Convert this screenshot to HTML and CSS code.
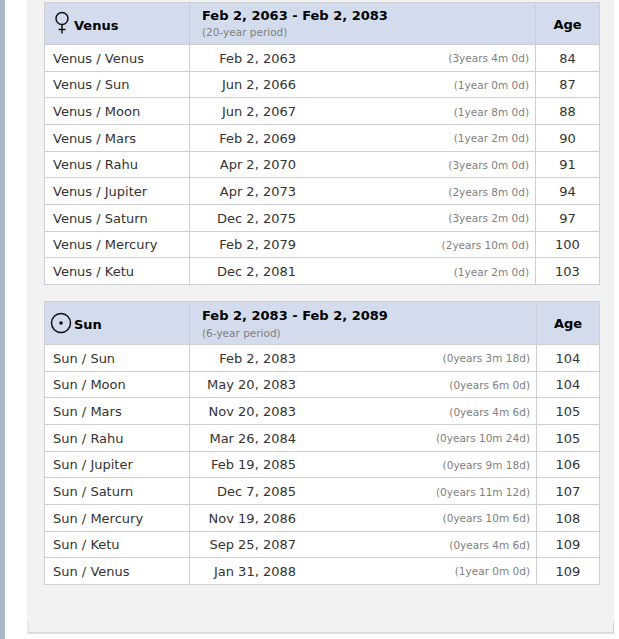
FILE: index.html
```html
<!DOCTYPE html>
<html lang="en">
<head>
<meta charset="utf-8">
<title>Dasha periods</title>
<link rel="stylesheet" href="styles.css">
</head>
<body>
<div class="page">
  <div class="rail"></div>
  <main class="panel">
    <div class="tables">
    <table class="dasha first">
      <thead>
        <tr>
          <th class="planet"><span class="planet-in"><svg class="ico-venus" viewBox="0 0 16 24" width="16" height="24"><circle cx="8" cy="7.5" r="6" fill="none" stroke="#111" stroke-width="1.5"/><path d="M8 13.5v9M4.5 18.5h7" fill="none" stroke="#111" stroke-width="1.5"/></svg>Venus</span></th>
          <th class="range">Feb 2, 2063 - Feb 2, 2083<small>(20-year period)</small></th>
          <th class="age">Age</th>
        </tr>
      </thead>
      <tbody>
        <tr><td class="name">Venus / Venus</td><td class="mid"><div class="mid-in"><span class="date">Feb 2, 2063</span><span class="dur">(3years 4m 0d)</span></div></td><td class="age">84</td></tr>
        <tr><td class="name">Venus / Sun</td><td class="mid"><div class="mid-in"><span class="date">Jun 2, 2066</span><span class="dur">(1year 0m 0d)</span></div></td><td class="age">87</td></tr>
        <tr><td class="name">Venus / Moon</td><td class="mid"><div class="mid-in"><span class="date">Jun 2, 2067</span><span class="dur">(1year 8m 0d)</span></div></td><td class="age">88</td></tr>
        <tr><td class="name">Venus / Mars</td><td class="mid"><div class="mid-in"><span class="date">Feb 2, 2069</span><span class="dur">(1year 2m 0d)</span></div></td><td class="age">90</td></tr>
        <tr><td class="name">Venus / Rahu</td><td class="mid"><div class="mid-in"><span class="date">Apr 2, 2070</span><span class="dur">(3years 0m 0d)</span></div></td><td class="age">91</td></tr>
        <tr><td class="name">Venus / Jupiter</td><td class="mid"><div class="mid-in"><span class="date">Apr 2, 2073</span><span class="dur">(2years 8m 0d)</span></div></td><td class="age">94</td></tr>
        <tr><td class="name">Venus / Saturn</td><td class="mid"><div class="mid-in"><span class="date">Dec 2, 2075</span><span class="dur">(3years 2m 0d)</span></div></td><td class="age">97</td></tr>
        <tr><td class="name">Venus / Mercury</td><td class="mid"><div class="mid-in"><span class="date">Feb 2, 2079</span><span class="dur">(2years 10m 0d)</span></div></td><td class="age">100</td></tr>
        <tr><td class="name">Venus / Ketu</td><td class="mid"><div class="mid-in"><span class="date">Dec 2, 2081</span><span class="dur">(1year 2m 0d)</span></div></td><td class="age">103</td></tr>
      </tbody>
    </table>
    <table class="dasha second">
      <thead>
        <tr>
          <th class="planet"><span class="planet-in"><svg class="ico-sun" viewBox="0 0 22 22" width="22" height="22"><circle cx="11" cy="11" r="9.5" fill="none" stroke="#111" stroke-width="1.5"/><circle cx="11" cy="11" r="1.8" fill="#111"/></svg>Sun</span></th>
          <th class="range">Feb 2, 2083 - Feb 2, 2089<small>(6-year period)</small></th>
          <th class="age">Age</th>
        </tr>
      </thead>
      <tbody>
        <tr><td class="name">Sun / Sun</td><td class="mid"><div class="mid-in"><span class="date">Feb 2, 2083</span><span class="dur">(0years 3m 18d)</span></div></td><td class="age">104</td></tr>
        <tr><td class="name">Sun / Moon</td><td class="mid"><div class="mid-in"><span class="date">May 20, 2083</span><span class="dur">(0years 6m 0d)</span></div></td><td class="age">104</td></tr>
        <tr><td class="name">Sun / Mars</td><td class="mid"><div class="mid-in"><span class="date">Nov 20, 2083</span><span class="dur">(0years 4m 6d)</span></div></td><td class="age">105</td></tr>
        <tr><td class="name">Sun / Rahu</td><td class="mid"><div class="mid-in"><span class="date">Mar 26, 2084</span><span class="dur">(0years 10m 24d)</span></div></td><td class="age">105</td></tr>
        <tr><td class="name">Sun / Jupiter</td><td class="mid"><div class="mid-in"><span class="date">Feb 19, 2085</span><span class="dur">(0years 9m 18d)</span></div></td><td class="age">106</td></tr>
        <tr><td class="name">Sun / Saturn</td><td class="mid"><div class="mid-in"><span class="date">Dec 7, 2085</span><span class="dur">(0years 11m 12d)</span></div></td><td class="age">107</td></tr>
        <tr><td class="name">Sun / Mercury</td><td class="mid"><div class="mid-in"><span class="date">Nov 19, 2086</span><span class="dur">(0years 10m 6d)</span></div></td><td class="age">108</td></tr>
        <tr><td class="name">Sun / Ketu</td><td class="mid"><div class="mid-in"><span class="date">Sep 25, 2087</span><span class="dur">(0years 4m 6d)</span></div></td><td class="age">109</td></tr>
        <tr><td class="name">Sun / Venus</td><td class="mid"><div class="mid-in"><span class="date">Jan 31, 2088</span><span class="dur">(1year 0m 0d)</span></div></td><td class="age">109</td></tr>
      </tbody>
    </table>
    </div>
    <div class="panel-foot"></div>
  </main>
</div>
</body>
</html>
```
FILE: styles.css
```css
html, body { margin: 0; padding: 0; background: #fff; }
body { height: 639px; overflow: hidden; font-family: "DejaVu Sans", Verdana, sans-serif; color: #333; }
.page { display: flex; height: 639px; }
.rail { width: 5px; height: 100%; background: #a9b6c3; margin-right: 22px; }
.panel { width: 587px; height: 634px; box-sizing: border-box; background: #f2f2f2; display: flex; flex-direction: column; justify-content: space-between; }
.tables { padding: 2px 14px 0 17px; }
.panel-foot { height: 12px; box-sizing: border-box; border-style: solid; border-width: 0 1px 2px 2px; border-color: #d8d8d8 #d0d0d0 #dcdcdc #e6e6e6; }
.dasha { width: 556px; table-layout: fixed; border-collapse: collapse; background: #fff; font-size: 13px; }
.first { margin-bottom: 16px; }
.dasha th, .dasha td { border: 1px solid #ccd0d4; padding: 0; box-sizing: border-box; }
.dasha th { background: #d2dcec; color: #000; font-weight: bold; text-align: left; height: 42px; }
.second th { height: 43px; }
.dasha td { height: 26.67px; padding-top: 1px; }
.planet { width: 145px; }
.age { width: 64px; text-align: center; }
.second .age { width: 63px; }
.dasha th.age { text-align: center; font-size: 13px; padding-top: 1px; }
.planet-in { display: flex; align-items: center; font-size: 13px; padding-top: 3px; }
.ico-venus { margin: -4px 4px 0 9px; }
.ico-sun { margin: -3px 2px 0 5px; }
.dasha th.range { padding-left: 12px; font-size: 13px; vertical-align: top; line-height: 16px; padding-top: 5px; }
.second th.range { padding-top: 6px; }
.range small { display: block; font-weight: normal; font-size: 10.5px; color: #808080; line-height: 16px; }
.second .range small { padding-top: 1px; }
.dasha td.name { padding-left: 8px; }
.mid-in { display: grid; grid-template-columns: 106px 1fr; align-items: center; padding-right: 6px; }
.date { text-align: right; }
.dur { text-align: right; font-size: 10.5px; color: #808080; }
```
